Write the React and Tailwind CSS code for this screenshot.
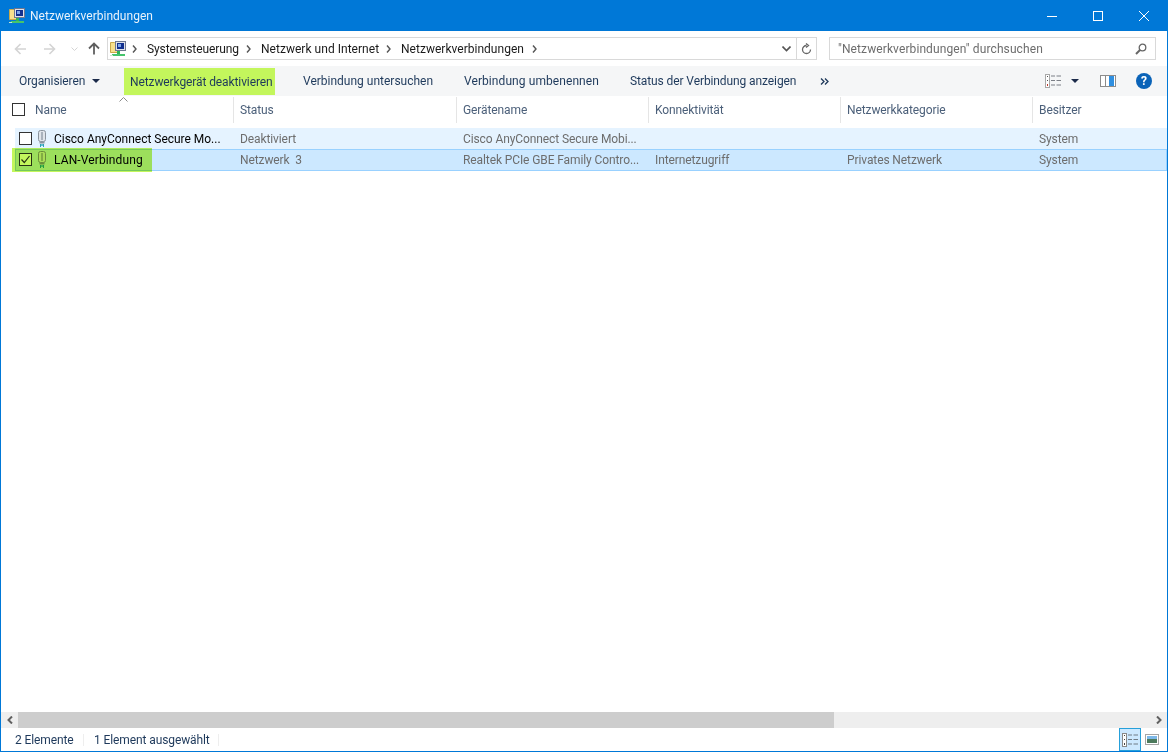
import React from 'react';

const columns = [
  { label: 'Name', width: 'w-[233px]', pad: 'pl-[34px]' },
  { label: 'Status', width: 'w-[223px]', pad: 'pl-[6px]' },
  { label: 'Gerätename', width: 'w-[192px]', pad: 'pl-[6px]' },
  { label: 'Konnektivität', width: 'w-[192px]', pad: 'pl-[6px]' },
  { label: 'Netzwerkkategorie', width: 'w-[192px]', pad: 'pl-[6px]' },
  { label: 'Besitzer', width: 'flex-1', pad: 'pl-[6px]' },
];

const crumbs = [
  { label: 'Systemsteuerung', box: 'w-[91px] tracking-[-0.1px]' },
  { label: 'Netzwerk und Internet', box: 'w-[117px] tracking-[0.03px]' },
  { label: 'Netzwerkverbindungen', box: 'w-[123px] tracking-[0.02px]' },
];
const commands = [
  { label: 'Verbindung untersuchen', width: 'w-[161px] tracking-[0px]' },
  { label: 'Verbindung umbenennen', width: 'w-[166px] tracking-[0.08px]' },
  { label: 'Status der Verbindung anzeigen', width: 'w-[189px]' },
];

const NetworkIcon = () => (
  <svg width="16" height="16" viewBox="0 0 16 16" className="shrink-0">
    <path d="M0.500 1.500h4l1 1h3v9h-8z" fill="#f8e08c" stroke="#c9a94a" />
    <rect x="5.500" y="0.500" width="10" height="9" fill="#dfe2ea" stroke="#6f7890" />
    <rect x="7" y="2" width="7" height="6" fill="#12308f" />
    <rect x="8" y="3" width="3" height="3" fill="#7fa6e8" />
    <rect x="7" y="10" width="3" height="3" fill="#2fb457" />
    <rect x="2" y="13" width="13" height="2" fill="#46c46c" />
    <rect x="0" y="14" width="3" height="1" fill="#c9e9d0" />
  </svg>
);

const PlugIcon = () => (
  <svg width="10" height="18" viewBox="0 0 10 18" className="shrink-0">
    <rect x="1.500" y="0.500" width="7" height="11" rx="2" fill="#dfe4ea" stroke="#8b949e" />
    <rect x="4" y="2" width="2" height="8" fill="#a9b2bc" />
    <rect x="2.500" y="11.500" width="5" height="2" fill="#8b949e" />
    <rect x="3" y="14" width="1" height="3" fill="#2f9fb5" />
    <rect x="6" y="14" width="1" height="3" fill="#2f9fb5" />
    <rect x="4" y="14" width="2" height="2" fill="#5fc0d0" />
  </svg>
);

const Chevron = () => (
  <svg width="5" height="8" viewBox="0 0 5 8" className="shrink-0">
    <path d="M1 0.500 4 4 1 7.500" fill="none" stroke="#555" strokeWidth="1.400" />
  </svg>
);

const Arrow = ({ dir, color }) => (
  <svg width="12" height="12" viewBox="0 0 12 12" className={dir === 'right' ? 'rotate-180' : ''}>
    <path d="M12 6H1.500M6.500 1 1.500 6l5 5" fill="none" stroke={color} strokeWidth="1.600" />
  </svg>
);

const Caret = () => (
  <svg width="8" height="4" viewBox="0 0 8 4" className="shrink-0">
    <path d="M0 0h8L4 4z" fill="#1b2a4a" />
  </svg>
);

const DetailsIcon = () => (
  <svg width="16" height="14" viewBox="0 0 16 14" className="shrink-0">
    <rect x="0.500" y="0.500" width="4" height="13" fill="#fff" stroke="#a8a8a8" />
    <rect x="2" y="2" width="1" height="1" fill="#555" />
    <rect x="2" y="6" width="1" height="1" fill="#555" />
    <rect x="2" y="10" width="1" height="2" fill="#c0392b" />
    <path d="M6 2h4M11.500 2H16M6 6.500h4M11.500 6.500H16M6 11h4M11.500 11H16" stroke="#7b7f86" strokeWidth="1" />
  </svg>
);

const Row = ({ checked, name, nameClass, status, device, link, category, rowClass }) => (
  <div className={`flex h-[21px] ml-[14px] items-center text-[12px] ${rowClass}`}>
    <div className="w-[219px] flex items-center shrink-0 h-full">
      <span className="w-[13px] h-[13px] ml-[4px] mr-[5px] border border-[#333] bg-white flex items-center justify-center shrink-0">
        {checked && (
          <svg width="11" height="11" viewBox="0 0 11 11">
            <path d="M1.500 5.500 4.300 8.500 9.500 2" fill="none" stroke="#333" strokeWidth="1.200" />
          </svg>
        )}
      </span>
      <PlugIcon />
      <span className={`ml-[7px] text-black truncate ${nameClass}`}>{name}</span>
    </div>
    <div className="w-[223px] pl-[6px] text-[#6d6d6d] shrink-0">{status}</div>
    <div className="w-[192px] pl-[6px] text-[#6d6d6d] shrink-0 truncate">{device}</div>
    <div className="w-[192px] pl-[6px] text-[#6d6d6d] shrink-0">{link}</div>
    <div className="w-[192px] pl-[6px] text-[#6d6d6d] shrink-0">{category}</div>
    <div className="flex-1 pl-[6px] text-[#6d6d6d]">System</div>
  </div>
);

const App = () => {
  return (
    <div className="relative w-[1168px] h-[752px] overflow-hidden bg-white border border-[#0078d7] flex flex-col font-['Roboto','Liberation_Sans',sans-serif] text-[12px] tracking-[-0.1px]">
      {/* title bar */}
      <div className="h-[30px] bg-[#0078d7] flex items-center pl-[8px] shrink-0 text-white">
        <NetworkIcon />
        <span className="ml-[5px] text-[12px] text-[#e8f2fb] tracking-[0.02px]">Netzwerkverbindungen</span>
        <div className="ml-auto flex items-center">
          <span className="w-[46px] h-[30px] flex items-center justify-center">
            <span className="w-[10px] h-px bg-white" />
          </span>
          <span className="w-[46px] h-[30px] flex items-center justify-center">
            <span className="w-[10px] h-[10px] border border-white" />
          </span>
          <span className="w-[46px] h-[30px] flex items-center justify-center">
            <svg width="10" height="10" viewBox="0 0 10 10">
              <path d="M0 0l10 10M10 0 0 10" stroke="#fff" strokeWidth="1" />
            </svg>
          </span>
        </div>
      </div>

      {/* address row */}
      <div className="h-[35px] flex items-center shrink-0 bg-white">
        <div className="w-[106px] flex items-center pl-[13px] shrink-0">
          <Arrow dir="left" color="#d4d4d4" />
          <span className="w-[18px]" />
          <Arrow dir="right" color="#d4d4d4" />
          <svg width="7" height="4" viewBox="0 0 7 4" className="ml-[15px]">
            <path d="M0.500 0.500 3.500 3.500 6.500 0.500" fill="none" stroke="#d4d4d4" />
          </svg>
          <svg width="12" height="13" viewBox="0 0 12 13" className="ml-[10px]">
            <path d="M6 12.500V2M1 6.500 6 1.500l5 5" fill="none" stroke="#5f5f5f" strokeWidth="1.800" />
          </svg>
        </div>
        <div className="w-[710px] h-[23px] border border-[#d9d9d9] flex items-center shrink-0">
          <span className="ml-[2px]"><NetworkIcon /></span>
          <span className="ml-[6px]"><Chevron /></span>
          {crumbs.map((c) => (
            <span key={c.label} className="flex items-center">
              <span className={`ml-[10px] text-[#1a1a1a] whitespace-nowrap ${c.box}`}>{c.label}</span>
              <span className="ml-[8px]"><Chevron /></span>
            </span>
          ))}
          <div className="ml-auto flex items-center h-full">
            <svg width="9" height="6" viewBox="0 0 9 6" className="mr-[5px]">
              <path d="M0.500 0.500 4.500 4.500 8.500 0.500" fill="none" stroke="#555" strokeWidth="1.600" />
            </svg>
            <span className="w-[20px] h-full border-l border-[#d9d9d9] flex items-center justify-center">
              <svg width="11" height="12" viewBox="0 0 11 12">
                <path d="M5.500 2.500a4 4 0 1 0 4 4M5 0.500l2.500 2L5 4.500" fill="none" stroke="#666" strokeWidth="1.300" />
              </svg>
            </span>
          </div>
        </div>
        <div className="ml-[12px] w-[327px] h-[23px] border border-[#d9d9d9] flex items-center px-[8px] shrink-0">
          <span className="text-[#6d6d6d] tracking-[0.1px]">"Netzwerkverbindungen" durchsuchen</span>
          <svg width="12" height="12" viewBox="0 0 12 12" className="ml-auto">
            <circle cx="7.500" cy="4.500" r="3.300" fill="none" stroke="#666" strokeWidth="1.300" />
            <path d="M5 7 1 11" stroke="#666" strokeWidth="2" />
          </svg>
        </div>
      </div>

      {/* command bar */}
      <div className="h-[30px] bg-[#f5f6f7] flex items-center shrink-0 text-[#1e395b] relative">
        <span className="ml-[18px] w-[67px] whitespace-nowrap">Organisieren</span>
        <span className="ml-[6px]"><Caret /></span>
        <span className="ml-[24px] w-[151px] h-[27px] mt-[1px] bg-[#c3f65c] flex items-center pl-[6px] shrink-0 whitespace-nowrap">
          Netzwerkgerät deaktivieren
        </span>
        <span className="w-[28px] shrink-0" />
        {commands.map((c) => (
          <span key={c.label} className={`${c.width} shrink-0 whitespace-nowrap`}>{c.label}</span>
        ))}
        <svg width="9" height="7" viewBox="0 0 9 7" className="ml-[1px] shrink-0">
          <path d="M1 0.500 4 3.500 1 6.500M5 0.500 8 3.500 5 6.500" fill="none" stroke="#1e395b" strokeWidth="1.300" />
        </svg>
        <div className="ml-auto flex items-center mr-[15px]">
          <DetailsIcon />
          <span className="ml-[10px]"><Caret /></span>
          <svg width="16" height="12" viewBox="0 0 16 12" className="ml-[21px]">
            <rect x="0.500" y="0.500" width="15" height="11" fill="#fff" stroke="#8c8c8c" />
            <rect x="9" y="1" width="5" height="10" fill="#2f8fe0" />
            <rect x="5" y="1" width="1" height="10" fill="#8c8c8c" />
          </svg>
          <span className="ml-[20px] w-[16px] h-[16px] rounded-full bg-[#0a63b8] text-white text-[12px] font-bold flex items-center justify-center leading-none">?</span>
        </div>
      </div>

      {/* column headers */}
      <div className="h-[27px] mt-px flex shrink-0 relative">
        <svg width="9" height="5" viewBox="0 0 9 5" className="absolute left-[118px] top-0">
          <path d="M0.500 4.500 4.500 0.500 8.500 4.500" fill="none" stroke="#8a8a8a" />
        </svg>
        <span className="absolute left-[11px] top-[6px] w-[13px] h-[13px] border border-[#333] bg-white" />
        {columns.map((col, i) => (
          <div
            key={col.label}
            className={`${col.width} ${col.pad} h-[26px] flex items-center text-[#4c607a] shrink-0 ${i < 5 ? 'border-r border-[#e5e5e5]' : ''}`}
          >
            {col.label}
          </div>
        ))}
      </div>

      {/* file list */}
      <div className="flex-1 pt-[4px]">
        <Row
          name="Cisco AnyConnect Secure Mo..."
          nameClass="tracking-[-0.02px]"
          status="Deaktiviert"
          device="Cisco AnyConnect Secure Mobi..."
          rowClass="bg-[#e5f3ff]"
        />
        <div className="h-[22px] ml-[14px] border border-[#99d1ff] bg-[#cce8ff]">
          <div className="-ml-[15px] -mt-px">
            <Row
              checked
              name="LAN-Verbindung"
              nameClass="tracking-[0.12px]"
              status={'Netzwerk\u00a0\u00a03'}
              device="Realtek PCIe GBE Family Contro..."
              link="Internetzugriff"
              category="Privates Netzwerk"
              rowClass=""
            />
          </div>
        </div>
      </div>

      {/* highlighter over the selected row */}
      <span className="absolute left-[11px] top-[147px] w-[140px] h-[24px] bg-[#c3f65c] mix-blend-multiply" />

      {/* horizontal scrollbar */}
      <div className="h-[16px] bg-[#eeeeee] flex items-center shrink-0">
        <span className="w-[17px] flex items-center justify-center">
          <svg width="6" height="8" viewBox="0 0 6 8">
            <path d="M5 0.500 1.500 4 5 7.500" fill="none" stroke="#606060" strokeWidth="2" />
          </svg>
        </span>
        <span className="w-[816px] h-full bg-[#cdcdcd]" />
        <span className="ml-auto w-[17px] flex items-center justify-center">
          <svg width="6" height="8" viewBox="0 0 6 8">
            <path d="M1 0.500 4.500 4 1 7.500" fill="none" stroke="#606060" strokeWidth="2" />
          </svg>
        </span>
      </div>

      {/* status bar */}
      <div className="h-[23px] flex items-center shrink-0 text-[#1e395b]">
        <span className="ml-[14px] w-[69px] border-r border-[#eeeeee] leading-[12px]">2 Elemente</span>
        <span className="ml-[10px] w-[125px] border-r border-[#eeeeee] leading-[12px] whitespace-nowrap">1 Element ausgewählt</span>
        <div className="ml-auto flex items-center mr-[8px]">
          <span className="w-[22px] h-[23px] bg-[#cce8ff] border border-[#26a0da] flex items-center justify-center">
            <svg width="16" height="14" viewBox="0 0 16 14">
              <rect x="0.500" y="0.500" width="4" height="13" fill="#fff" stroke="#888" />
              <rect x="2" y="2" width="1" height="1" fill="#444" />
              <rect x="2" y="6" width="1" height="1" fill="#444" />
              <rect x="2" y="10" width="1" height="2" fill="#444" />
              <path d="M6 2h4M11.500 2H16M6 6.500h4M11.500 6.500H16M6 11h4M11.500 11H16" stroke="#6f7a85" />
            </svg>
          </span>
          <svg width="14" height="11" viewBox="0 0 14 11" className="ml-[4px]">
            <rect x="0.500" y="0.500" width="13" height="10" fill="#fff" stroke="#a5a5a5" />
            <rect x="2" y="2" width="10" height="3" fill="#7db8e8" />
            <rect x="2" y="5" width="10" height="4" fill="#4d7a5c" />
          </svg>
        </div>
      </div>
    </div>
  );
};

export default App;
